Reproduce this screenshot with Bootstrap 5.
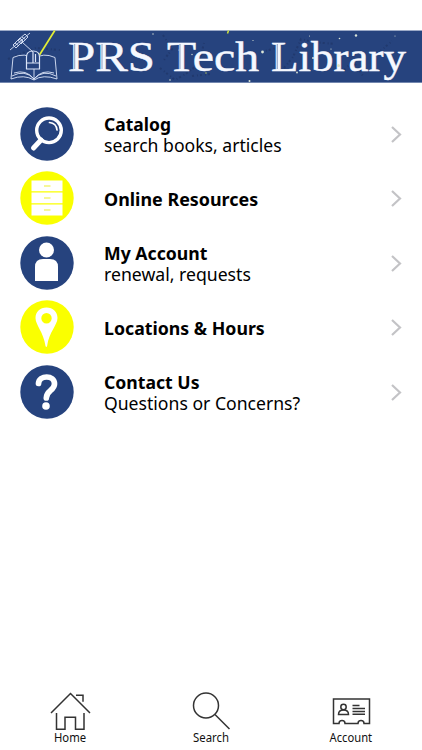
<!DOCTYPE html>
<html lang="en">
<head>
<meta charset="utf-8">
<meta name="viewport" content="width=device-width, initial-scale=1">
<title>PRS Tech Library</title>
<link href="https://cdn.jsdelivr.net/npm/bootstrap@5.3.0/dist/css/bootstrap.min.css" rel="stylesheet">
<style>
body{font-family:"Noto Sans",sans-serif;color:#000;height:750px;overflow:hidden}
.brand-banner{margin-top:30px;height:53px}
.brand-banner svg{width:422px;height:53px}
.brand-banner text{font-family:"Liberation Serif",serif;font-size:43px;fill:#f5f8ff;stroke:#f5f8ff;stroke-width:.5}
.menu-list{margin-top:18.5px}
.menu-item{height:64.5px;padding:0 20px}
.menu-icon{width:54px;height:54px;margin-left:-.4px;margin-right:30px}
.menu-copy{font-size:18px;line-height:21px;white-space:nowrap;padding-top:1.500px}
.menu-copy span,.menu-copy strong{display:block;width:max-content;transform-origin:left center}
.chevron{width:12px;height:19px;margin-top:1px;fill:none;stroke:#c3c3c6;stroke-width:2.2}
.tab-row{height:62px;font-size:12px;line-height:14px}
.tab-row svg{width:44px;height:40px;margin-top:2px;margin-bottom:1px;fill:none;stroke:#333;stroke-width:1.5}
.tab-link{width:140.5px;color:#111}
</style>
</head>
<body class="bg-white d-flex flex-column">
<header class="brand-banner flex-shrink-0">
<h1 class="m-0 lh-1 fs-6">
<svg class="d-block" viewBox="0 30 422 53" role="img" aria-label="PRS Tech Library">
<rect y="30.5" width="422" height="52.5" fill="#26437e"/>
<path d="M0 30.5h422M0 82.7h422" stroke="#9eacc9" stroke-width=".8"/>
<g fill="none" stroke="#1d3260" stroke-width="2" opacity=".55" stroke-dasharray="2 3 1 2">
<path d="M8 59l17-7 11-4 24 2M160 68l15 12 12-7 12-9 5-21M284 68l9-11 8-18 12 3 22 2M344 70l9-9 10 15M374 57l18-16M261 52l16-4M163 35l9 14-8 11M192 76l19-2"/>
</g>
<path d="M54.800 30.500L39.500 55" stroke="#e3ee35" stroke-width="1.700"/>
<path d="M228.500 30.500l-1 3" stroke="#cfe43a" stroke-width="1.5"/>
<g fill="none" stroke="#dce5f8" stroke-width=".9" stroke-linejoin="round">
<path d="M13 57.500Q25 52 34 59q9-7 21-1.500L57 79Q43 74 34 80 24 74 11 79zM34 68v12M12 76q13-7 22 3 9-10 22-3M14 73q12-4 20 6 8-10 20-6"/>
<path d="M26.500 69V57q0-6 6.500-6t6.500 6v12zM26.500 63h13M33 52v11M35.500 54v8" stroke-width="1.200" fill="#26437e"/>
<path d="M10 50L30 33M13 45l7-7 3 3-7 7zM18 40l7-6 3 3-7 7zM22 42l11 10M15 43l4 3M19 39l4 3M22 37l4 3"/>
</g>
<g fill="#dbe6d8">
<circle cx="153" cy="34" r=".7"/><circle cx="192" cy="54.500" r=".7"/><circle cx="262.500" cy="52" r="1.400"/><circle cx="249.500" cy="81" r="1"/><circle cx="356" cy="35.500" r="1.200"/><circle cx="339.500" cy="38.500" r=".8"/><circle cx="297" cy="72.500" r=".9"/><circle cx="309.500" cy="36" r=".5"/><circle cx="170" cy="80" r=".8"/><circle cx="313" cy="58" r=".9"/><circle cx="253" cy="40.500" r=".6"/><circle cx="331" cy="49" r=".6"/><circle cx="395" cy="36" r=".5"/><circle cx="206" cy="73" r=".7" fill="#c6d45c"/><circle cx="179" cy="50" r=".6"/>
</g>
<g>
<text x="68" y="70.500" textLength="87" lengthAdjust="spacingAndGlyphs">PRS</text>
<text x="167" y="70.500" textLength="92" lengthAdjust="spacingAndGlyphs">Tech</text>
<text x="271" y="70.500" textLength="135" lengthAdjust="spacingAndGlyphs">Library</text>
</g>
<path d="M74.700 44v25M102 44v25M180 44v25M277.300 44v25" stroke="#26437e" stroke-width=".7" opacity=".7"/>
<circle cx="338.500" cy="65.500" r="1.500" fill="#e0e3c0"/>
</svg>
</h1>
</header>
<main class="menu-list flex-shrink-0">
<a href="#" class="menu-item d-flex align-items-center text-reset text-decoration-none">
<svg class="menu-icon flex-shrink-0" viewBox="0 0 54 54"><circle cx="27" cy="27" r="26.700" fill="#26437e"/><g fill="none" stroke="#fff" stroke-linecap="round"><circle cx="29" cy="23.300" r="12.300" stroke-width="3.400"/><path d="M21 33l-7.500 8" stroke-width="5"/><path d="M29.500 15.500q7 .8 7.500 7.500" stroke-width="1.700"/></g></svg>
<div class="menu-copy flex-grow-1"><strong data-w="67">Catalog</strong><span data-w="178">search books, articles</span></div>
<svg class="chevron" viewBox="0 0 12 19"><path d="M2 2l8 7.500-8 7.500"/></svg>
</a>
<a href="#" class="menu-item d-flex align-items-center text-reset text-decoration-none">
<svg class="menu-icon flex-shrink-0" viewBox="0 0 54 54"><circle cx="27" cy="27" r="26.700" fill="#faff00"/><path d="M11.500 9.500h31v10.800h-31zM11.500 21.500h31v10.800h-31zM11.500 33.500h31v11h-31z" fill="#fff"/><path d="M24 15h6.500M24 27h6.500M24 39h6.500" stroke="#f3f577" stroke-width="1.500"/></svg>
<div class="menu-copy flex-grow-1"><strong data-w="154">Online Resources</strong></div>
<svg class="chevron" viewBox="0 0 12 19"><path d="M2 2l8 7.500-8 7.500"/></svg>
</a>
<a href="#" class="menu-item d-flex align-items-center text-reset text-decoration-none">
<svg class="menu-icon flex-shrink-0" viewBox="0 0 54 54"><circle cx="27" cy="27" r="26.700" fill="#26437e"/><circle cx="26.500" cy="14" r="7.500" fill="#fff"/><path d="M15 45V31q0-8 8-8h7q8 0 8 8v14z" fill="#fff"/></svg>
<div class="menu-copy flex-grow-1"><strong data-w="103">My Account</strong><span data-w="147">renewal, requests</span></div>
<svg class="chevron" viewBox="0 0 12 19"><path d="M2 2l8 7.500-8 7.500"/></svg>
</a>
<a href="#" class="menu-item d-flex align-items-center text-reset text-decoration-none">
<svg class="menu-icon flex-shrink-0" viewBox="0 0 54 54"><circle cx="27" cy="27" r="26.700" fill="#faff00"/><path fill="#fff" fill-rule="evenodd" d="M26.500 7.500c-6.500 0-11 4.500-11 10.500 0 7 8 14 10 28q.8 2 1.600 0C29 32 37.500 25 37.500 18c0-6-4.500-10.500-11-10.500zm0 5.500a5.200 5.200 0 1 1 0 10.400 5.200 5.200 0 1 1 0-10.400z"/></svg>
<div class="menu-copy flex-grow-1"><strong data-w="160.500">Locations &amp; Hours</strong></div>
<svg class="chevron" viewBox="0 0 12 19"><path d="M2 2l8 7.500-8 7.500"/></svg>
</a>
<a href="#" class="menu-item d-flex align-items-center text-reset text-decoration-none">
<svg class="menu-icon flex-shrink-0" viewBox="0 0 54 54"><circle cx="27" cy="27" r="26.700" fill="#26437e"/><path d="M18.500 18.500C19 10 34.500 9.500 34.500 19c0 6.500-8.200 6.500-8.200 14" fill="none" stroke="#fff" stroke-width="5.700" stroke-linecap="round"/><circle cx="26" cy="41" r="3.800" fill="#fff"/></svg>
<div class="menu-copy flex-grow-1"><strong data-w="96">Contact Us</strong><span data-w="196.500">Questions or Concerns?</span></div>
<svg class="chevron" viewBox="0 0 12 19"><path d="M2 2l8 7.500-8 7.500"/></svg>
</a>
</main>
<nav class="tab-row mt-auto d-flex flex-shrink-0" aria-label="Main">
<a href="#" class="tab-link d-flex flex-column align-items-center text-decoration-none"><svg viewBox="48 690 44 40"><path d="M51 713l19.500-19.500L90 713M56.500 713v16.200H65v-12h10.500v12h8.500V713M76 695.200h7v6.500"/></svg><span data-w="32">Home</span></a>
<a href="#" class="tab-link d-flex flex-column align-items-center text-decoration-none"><svg viewBox="188.500 690 44 40"><circle cx="205.500" cy="705.500" r="12.500"/><path d="M214.500 714.500L229 729"/></svg><span data-w="36">Search</span></a>
<a href="#" class="tab-link d-flex flex-column align-items-center text-decoration-none"><svg viewBox="329 690 44 40"><path d="M333.500 699h36v24.500H364a3 3 0 0 0-6 0h-13a3 3 0 0 0-6 0h-5.500z"/><circle cx="343.500" cy="707" r="2.700"/><path d="M338.500 714.500c0-3 2-4.500 5-4.500s5 1.500 5 4.500zM352.500 705.500h7M352.500 708.500h12.500M352.500 711.500h12.500M352.500 714.300h12.500"/></svg><span data-w="43">Account</span></a>
</nav>
<script src="https://cdn.jsdelivr.net/npm/bootstrap@5.3.0/dist/js/bootstrap.bundle.min.js"></script>
<script>
// Condense each label to its intended width.
document.querySelectorAll('[data-w]').forEach(function(el){
  el.style.transform='scaleX('+(el.dataset.w/el.offsetWidth)+')';
});
</script>
</body>
</html>
